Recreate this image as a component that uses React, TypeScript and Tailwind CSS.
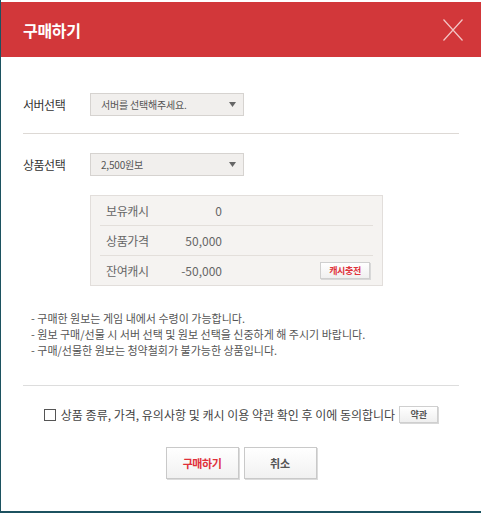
const FONT = "font-['Noto_Sans_CJK_KR','Noto_Sans',sans-serif]";

function SelectBox({ value }: { value: string }) {
  return (
    <div className="flex h-[23px] w-[154px] items-center justify-between border border-[#d6d3d0] bg-[#f1efed] pl-[10px] pr-[7px] text-[10px] tracking-[-0.02em] text-[#555]">
      <span>{value}</span>
      <svg width="7" height="5" viewBox="0 0 7 5">
        <path d="M0 0h7L3.5 5z" fill="#666" />
      </svg>
    </div>
  );
}

function InfoRow({ label, value, last, children }: { label: string; value: string; last?: boolean; children?: React.ReactNode }) {
  return (
    <div className={`flex items-center ${last ? "h-[29px]" : "h-[30px] border-b border-[#e3dfdb]"}`}>
      <span className="w-[64px] pl-[6px] text-[12px] tracking-[-0.03em] text-[#666]">{label}</span>
      <span className="w-[58px] text-right text-[12px] text-[#666]">{value}</span>
      {children}
    </div>
  );
}

const notes = [
  "- 구매한 원보는 게임 내에서 수령이 가능합니다.",
  "- 원보 구매/선물 시 서버 선택 및 원보 선택을 신중하게 해 주시기 바랍니다.",
  "- 구매/선물한 원보는 청약철회가 불가능한 상품입니다.",
];

export default function App() {
  return (
    <div className={`flex h-[513px] w-[481px] flex-col bg-[#1c5260] pb-[2px] pl-px ${FONT}`}>
      <div className="flex flex-1 flex-col bg-white pt-[2px]">
        {/* header */}
        <header className="flex h-[55px] items-center justify-between bg-[#d2373a] pl-[22px] pr-[18px]">
          <h1 className="text-[16px] font-bold tracking-[-0.02em] text-white">구매하기</h1>
          <svg width="20" height="22" viewBox="0 0 20 22">
            <path d="M0.5 0.5L19.5 21.5M19.5 0.5L0.5 21.5" stroke="#f3c6c6" strokeWidth="1.2" />
          </svg>
        </header>

        <div className="flex flex-col px-[22px]">
          <div className="mt-[36px] flex items-center">
            <span className="w-[67px] text-[12px] tracking-[-0.04em] text-[#333]">서버선택</span>
            <SelectBox value="서버를 선택해주세요." />
          </div>

          <div className="mt-[17px] h-px bg-[#ddd9d5]" />

          <div className="mt-[19px] flex items-center">
            <span className="w-[67px] text-[12px] tracking-[-0.04em] text-[#333]">상품선택</span>
            <SelectBox value="2,500원보" />
          </div>

          <div className="ml-[67px] mt-[19px] w-[293px] border border-[#e2dedb] bg-[#f5f3f1] px-[9px]">
            <InfoRow label="보유캐시" value="0" />
            <InfoRow label="상품가격" value="50,000" />
            <InfoRow label="잔여캐시" value="-50,000" last>
              <button className="ml-auto mr-[3px] h-[17px] w-[50px] border border-[#cfcfcf] bg-gradient-to-b from-white to-[#f0f0f0] text-[9px] font-bold tracking-[-0.04em] text-[#e0343c] shadow-[1px_1px_0_#d8d8d8]">
                캐시충전
              </button>
            </InfoRow>
          </div>

          <ul className="mt-[24px] pl-[8px] text-[11px] leading-[16px] text-[#555]">
            {notes.map((n) => (
              <li key={n}>{n}</li>
            ))}
          </ul>

          <div className="mt-[27px] h-px bg-[#dddddd]" />

          <div className="mt-[20px] flex h-[17px] items-center justify-center">
            <span className="h-[12px] w-[12px] border border-[#555] bg-white" />
            <span className="ml-[5px] text-[12px] text-[#444]">
              상품 종류, 가격, 유의사항 및 캐시 이용 약관 확인 후 이에 동의합니다
            </span>
            <button className="ml-[4px] h-[17px] w-[39px] border border-[#cfcfcf] bg-gradient-to-b from-white to-[#efefef] text-[9px] font-bold text-[#555] shadow-[1px_1px_0_#d8d8d8]">
              약관
            </button>
          </div>

          <div className="mt-[24px] flex justify-center gap-[5px]">
            <button className="h-[32px] w-[73px] border border-[#c9c9c9] bg-gradient-to-b from-white to-[#f1f1f1] text-[11px] font-bold tracking-[-0.04em] text-[#e0303a] shadow-[1px_1px_0_#dcdcdc]">
              구매하기
            </button>
            <button className="h-[32px] w-[73px] border border-[#c9c9c9] bg-gradient-to-b from-white to-[#f1f1f1] text-[11px] font-bold text-[#555] shadow-[1px_1px_0_#dcdcdc]">
              취소
            </button>
          </div>
        </div>
      </div>
    </div>
  );
}
